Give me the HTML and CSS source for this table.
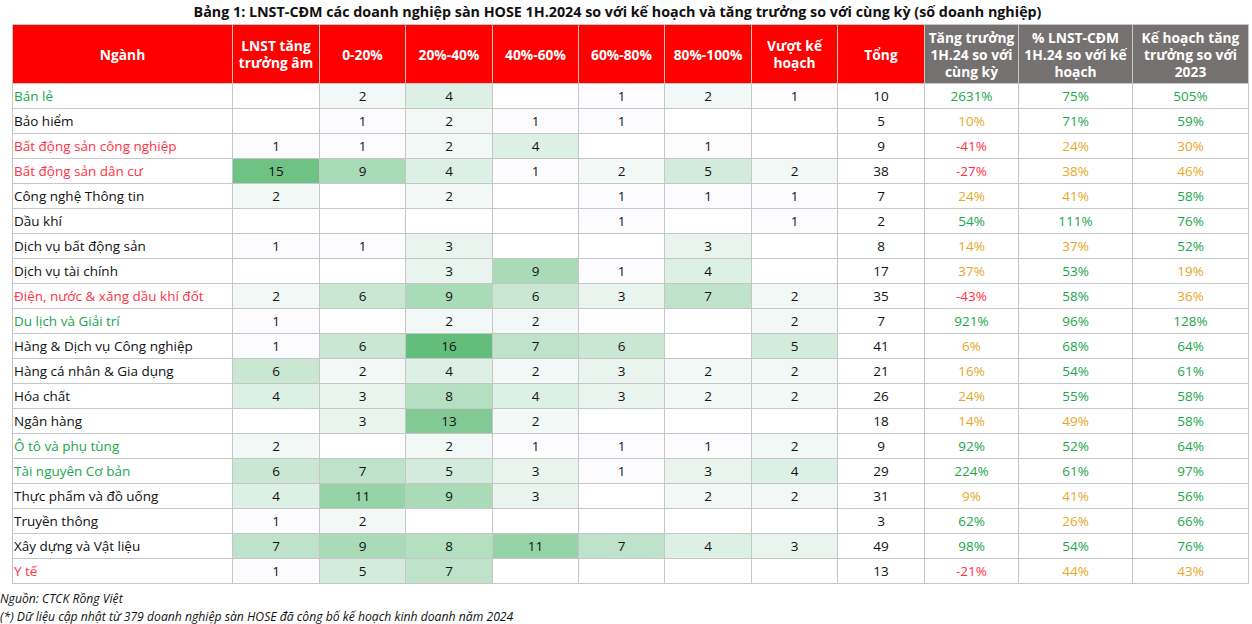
FILE: index.html
```html
<!DOCTYPE html>
<html lang="vi">
<head>
<meta charset="utf-8">
<link rel="stylesheet" href="styles.css">
</head>
<body>
<div class="page">
<h1 class="title">Bảng 1: LNST-CĐM các doanh nghiệp sàn HOSE 1H.2024 so với kế hoạch và tăng trưởng so với cùng kỳ (số doanh nghiệp)</h1>
<table class="grid">
<colgroup>
<col class="c-name"><col class="c87"><col class="c86"><col class="c87"><col class="c86"><col class="c86"><col class="c87"><col class="c86"><col class="c87"><col class="c94"><col class="c114"><col class="c116">
</colgroup>
<thead>
<tr>
<th class="red">Ngành</th>
<th class="red">LNST tăng<br>trưởng âm</th>
<th class="red">0-20%</th>
<th class="red">20%-40%</th>
<th class="red">40%-60%</th>
<th class="red">60%-80%</th>
<th class="red">80%-100%</th>
<th class="red">Vượt kế<br>hoạch</th>
<th class="red">Tổng</th>
<th class="gray">Tăng trưởng<br>1H.24 so với<br>cùng kỳ</th>
<th class="gray">% LNST-CĐM<br>1H.24 so với kế<br>hoạch</th>
<th class="gray">Kế hoạch tăng<br>trưởng so với<br>2023</th>
</tr>
</thead>
<tbody>
<tr><td class="name g">Bán lẻ</td><td></td><td class="h2">2</td><td class="h4">4</td><td></td><td class="h1">1</td><td class="h2">2</td><td class="h1">1</td><td>10</td><td class="g">2631%</td><td class="g">75%</td><td class="g">505%</td></tr>
<tr><td class="name">Bảo hiểm</td><td></td><td class="h1">1</td><td class="h2">2</td><td class="h1">1</td><td class="h1">1</td><td></td><td></td><td>5</td><td class="o">10%</td><td class="g">71%</td><td class="g">59%</td></tr>
<tr><td class="name r">Bất động sản công nghiệp</td><td class="h1">1</td><td class="h1">1</td><td class="h2">2</td><td class="h4">4</td><td></td><td class="h1">1</td><td></td><td>9</td><td class="r">-41%</td><td class="o">24%</td><td class="o">30%</td></tr>
<tr><td class="name r">Bất động sản dân cư</td><td class="h15">15</td><td class="h9">9</td><td class="h4">4</td><td class="h1">1</td><td class="h2">2</td><td class="h5">5</td><td class="h2">2</td><td>38</td><td class="r">-27%</td><td class="o">38%</td><td class="o">46%</td></tr>
<tr><td class="name">Công nghệ Thông tin</td><td class="h2">2</td><td></td><td class="h2">2</td><td></td><td class="h1">1</td><td class="h1">1</td><td class="h1">1</td><td>7</td><td class="o">24%</td><td class="o">41%</td><td class="g">58%</td></tr>
<tr><td class="name">Dầu khí</td><td></td><td></td><td></td><td></td><td class="h1">1</td><td></td><td class="h1">1</td><td>2</td><td class="g">54%</td><td class="g">111%</td><td class="g">76%</td></tr>
<tr><td class="name">Dịch vụ bất động sản</td><td class="h1">1</td><td class="h1">1</td><td class="h3">3</td><td></td><td></td><td class="h3">3</td><td></td><td>8</td><td class="o">14%</td><td class="o">37%</td><td class="g">52%</td></tr>
<tr><td class="name">Dịch vụ tài chính</td><td></td><td></td><td class="h3">3</td><td class="h9">9</td><td class="h1">1</td><td class="h4">4</td><td></td><td>17</td><td class="o">37%</td><td class="g">53%</td><td class="o">19%</td></tr>
<tr><td class="name r">Điện, nước &amp; xăng dầu khí đốt</td><td class="h2">2</td><td class="h6">6</td><td class="h9">9</td><td class="h6">6</td><td class="h3">3</td><td class="h7">7</td><td class="h2">2</td><td>35</td><td class="r">-43%</td><td class="g">58%</td><td class="o">36%</td></tr>
<tr><td class="name g">Du lịch và Giải trí</td><td class="h1">1</td><td></td><td class="h2">2</td><td class="h2">2</td><td></td><td></td><td class="h2">2</td><td>7</td><td class="g">921%</td><td class="g">96%</td><td class="g">128%</td></tr>
<tr><td class="name">Hàng &amp; Dịch vụ Công nghiệp</td><td class="h1">1</td><td class="h6">6</td><td class="h16">16</td><td class="h7">7</td><td class="h6">6</td><td></td><td class="h5">5</td><td>41</td><td class="o">6%</td><td class="g">68%</td><td class="g">64%</td></tr>
<tr><td class="name">Hàng cá nhân &amp; Gia dụng</td><td class="h6">6</td><td class="h2">2</td><td class="h4">4</td><td class="h2">2</td><td class="h3">3</td><td class="h2">2</td><td class="h2">2</td><td>21</td><td class="o">16%</td><td class="g">54%</td><td class="g">61%</td></tr>
<tr><td class="name">Hóa chất</td><td class="h4">4</td><td class="h3">3</td><td class="h8">8</td><td class="h4">4</td><td class="h3">3</td><td class="h2">2</td><td class="h2">2</td><td>26</td><td class="o">24%</td><td class="g">55%</td><td class="g">58%</td></tr>
<tr><td class="name">Ngân hàng</td><td></td><td class="h3">3</td><td class="h13">13</td><td class="h2">2</td><td></td><td></td><td></td><td>18</td><td class="o">14%</td><td class="o">49%</td><td class="g">58%</td></tr>
<tr><td class="name g">Ô tô và phụ tùng</td><td class="h2">2</td><td></td><td class="h2">2</td><td class="h1">1</td><td class="h1">1</td><td class="h1">1</td><td class="h2">2</td><td>9</td><td class="g">92%</td><td class="g">52%</td><td class="g">64%</td></tr>
<tr><td class="name g">Tài nguyên Cơ bản</td><td class="h6">6</td><td class="h7">7</td><td class="h5">5</td><td class="h3">3</td><td class="h1">1</td><td class="h3">3</td><td class="h4">4</td><td>29</td><td class="g">224%</td><td class="g">61%</td><td class="g">97%</td></tr>
<tr><td class="name">Thực phẩm và đồ uống</td><td class="h4">4</td><td class="h11">11</td><td class="h9">9</td><td class="h3">3</td><td></td><td class="h2">2</td><td class="h2">2</td><td>31</td><td class="o">9%</td><td class="o">41%</td><td class="g">56%</td></tr>
<tr><td class="name">Truyền thông</td><td class="h1">1</td><td class="h2">2</td><td></td><td></td><td></td><td></td><td></td><td>3</td><td class="g">62%</td><td class="o">26%</td><td class="g">66%</td></tr>
<tr><td class="name">Xây dựng và Vật liệu</td><td class="h7">7</td><td class="h9">9</td><td class="h8">8</td><td class="h11">11</td><td class="h7">7</td><td class="h4">4</td><td class="h3">3</td><td>49</td><td class="g">98%</td><td class="g">54%</td><td class="g">76%</td></tr>
<tr><td class="name r">Y tế</td><td class="h1">1</td><td class="h5">5</td><td class="h7">7</td><td></td><td></td><td></td><td></td><td>13</td><td class="r">-21%</td><td class="o">44%</td><td class="o">43%</td></tr>
</tbody>
</table>
<p class="note">Nguồn: CTCK Rồng Việt</p>
<p class="note">(*) Dữ liệu cập nhật từ 379 doanh nghiệp sàn HOSE đã công bố kế hoạch kinh doanh năm 2024</p>
</div>
</body>
</html>
```

FILE: styles.css
```css
html, body {
  margin: 0;
  padding: 0;
  background: #ffffff;
}
body {
  font-family: "Open Sans", "Noto Sans", sans-serif;
  color: #111111;
  width: 1252px;
  height: 624px;
  overflow: hidden;
}
.page {
  display: flex;
  flex-direction: column;
}
.title {
  margin: 2px 0 0 0;
  height: 22px;
  line-height: 20px;
  font-size: 14.3px;
  font-weight: 700;
  text-align: center;
  color: #111;
  padding-right: 17px;
}
.grid {
  margin-left: 12px;
  border-collapse: collapse;
  table-layout: fixed;
  width: 1237px;
  font-size: 13.5px;
}
.c-name { width: 220px; }
.c86 { width: 86px; }
.c87 { width: 87px; }
.c94 { width: 94px; }
.c114 { width: 114px; }
.c116 { width: 116px; }
.grid th, .grid td {
  border: 1px solid #c6c6c6;
  padding: 0;
  text-align: center;
  white-space: nowrap;
}
.grid th {
  height: 58px;
  color: #ffffff;
  font-weight: 700;
  line-height: 17px;
  font-size: 13.8px;
}
.grid th.red { background: #ff0000; }
.grid th.gray { background: #767171; }
.grid td {
  height: 24px;
  line-height: 24px;
}
.grid td.name {
  text-align: left;
  padding-left: 1px;
}
.g { color: #1aa64c; }
.r { color: #ff3347; }
.o { color: #e6a728; }
.h1 { background: #fcfcff; }
.h2 { background: #f2f8f6; }
.h3 { background: #e8f4ed; }
.h4 { background: #ddf0e5; }
.h5 { background: #d3ebdc; }
.h6 { background: #c9e7d3; }
.h7 { background: #bfe3ca; }
.h8 { background: #b5dfc1; }
.h9 { background: #aadbb9; }
.h10 { background: #a0d7b0; }
.h11 { background: #96d3a7; }
.h12 { background: #8ccf9e; }
.h13 { background: #82ca95; }
.h14 { background: #77c68d; }
.h15 { background: #6dc284; }
.h16 { background: #63be7b; }
.note {
  margin: 0;
  font-style: italic;
  font-size: 12.2px;
  line-height: 18px;
  color: #111;
}
.note:first-of-type {
  margin-top: 6px;
}
```
